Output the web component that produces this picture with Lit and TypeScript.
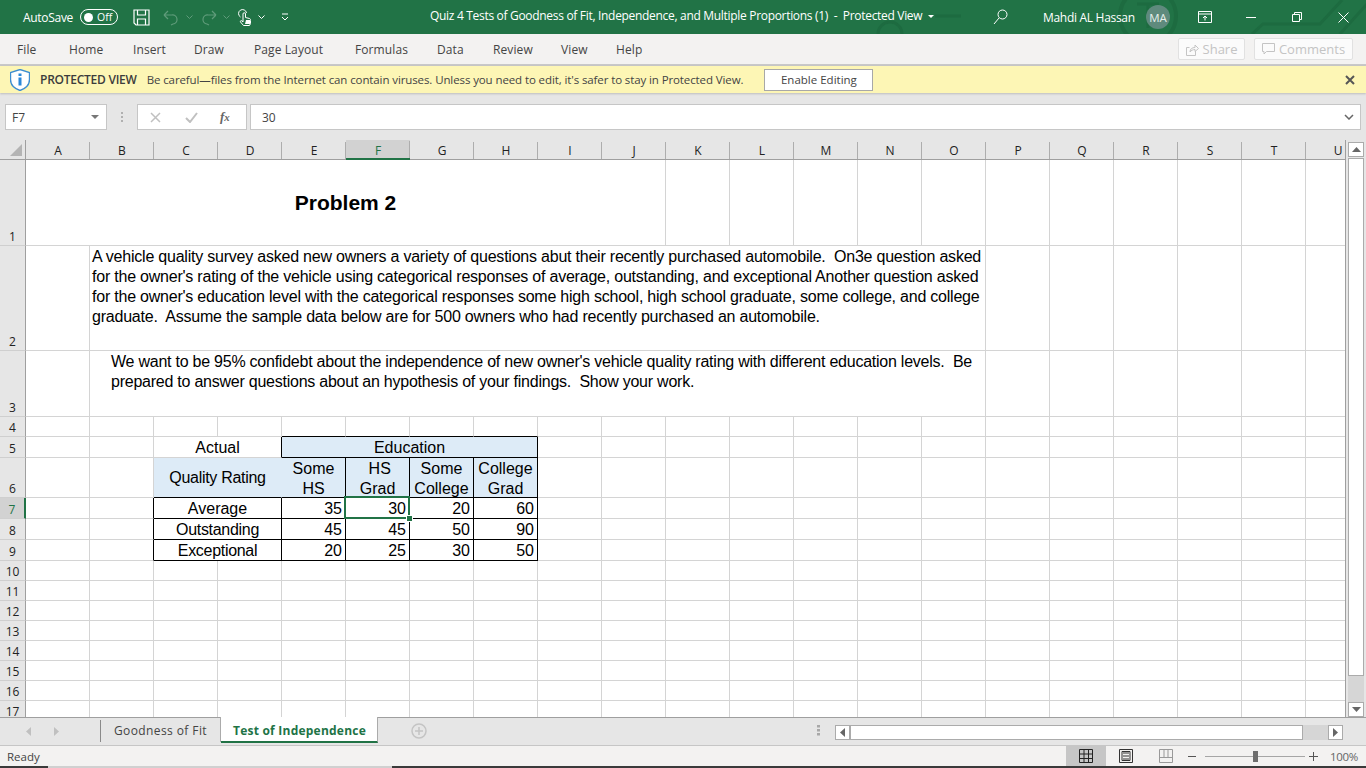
import { LitElement, css, html, svg } from 'lit';
import { customElement } from 'lit/decorators.js';

type Cell = { c: number; span?: number; text?: unknown; cls?: string };

const COLS = 'ABCDEFGHIJKLMNOPQRSTU'.split('');
const TABS = ['File', 'Home', 'Insert', 'Draw', 'Page Layout', 'Formulas', 'Data', 'Review', 'View', 'Help'];

// E..H = 4..7, table data rows
const dataRow = (label: string, nums: number[], sel = false, labelCls = ''): Cell[] => [
  { c: 1, cls: 'rb' },
  { c: 2, span: 2, text: label, cls: 'mid rb bb ' + labelCls },
  ...nums.map((n, i) => ({
    c: 4 + i,
    text: n,
    cls: 'num rb bb' + (sel && i === 1 ? ' sel' : ''),
  })),
];

const ROWS: { n: number; cells: Cell[] }[] = [
  { n: 1, cells: [{ c: 0, span: 10, text: 'Problem 2', cls: 'title-cell' }] },
  {
    n: 2,
    cells: [
      {
        c: 1,
        span: 14,
        cls: 'para',
        text: html`A vehicle quality survey asked new owners a variety of questions abut their recently purchased automobile.&nbsp; On3e question asked<br />for the owner's rating of the vehicle using categorical responses of average, outstanding, and exceptional Another question asked<br />for the owner's education level with the categorical responses some high school, high school graduate, some college, and college<br />graduate.&nbsp; Assume the sample data below are for 500 owners who had recently purchased an automobile.`,
      },
    ],
  },
  {
    n: 3,
    cells: [
      {
        c: 1,
        span: 14,
        cls: 'para indent',
        text: html`We want to be 95% confidebt about the independence of new owner's vehicle quality rating with different education levels.&nbsp; Be<br />prepared to answer questions about an hypothesis of your findings.&nbsp; Show your work.`,
      },
    ],
  },
  { n: 4, cells: [4, 5, 6, 7].map((c) => ({ c, cls: 'bb' })) },
  {
    n: 5,
    cells: [
      { c: 2, span: 2, text: 'Actual', cls: 'mid rb' },
      { c: 4, span: 4, text: 'Education', cls: 'mid blue rb bb' },
    ],
  },
  {
    n: 6,
    cells: [
      { c: 2, span: 2, text: 'Quality Rating', cls: 'mid blue vmid bb narrow noedge' },
      { c: 4, text: html`Some<br />HS`, cls: 'mid blue rb bb' },
      { c: 5, text: html`&nbsp;HS<br />Grad`, cls: 'mid blue rb bb' },
      { c: 6, text: html`Some<br />College`, cls: 'mid blue rb bb' },
      { c: 7, text: html`College<br />Grad`, cls: 'mid blue rb bb' },
    ],
  },
  { n: 7, cells: dataRow('Average', [35, 30, 20, 60], true) },
  { n: 8, cells: dataRow('Outstanding', [45, 45, 50, 90], false, 'narrow') },
  { n: 9, cells: dataRow('Exceptional', [20, 25, 30, 50], false, 'narrow') },
  ...[10, 11, 12, 13, 14, 15, 16, 17].map((n) => ({ n, cells: [] as Cell[] })),
];

// fills the gaps of a row with empty cells so the gridlines come out
function fillRow(cells: Cell[]): Cell[] {
  const out: Cell[] = [];
  let i = 0;
  const sorted = [...cells].sort((a, b) => a.c - b.c);
  for (const cell of sorted) {
    while (i < cell.c) out.push({ c: i++ });
    out.push(cell);
    i += cell.span ?? 1;
  }
  while (i < COLS.length) out.push({ c: i++ });
  return out;
}

@customElement('app-root')
export class AppRoot extends LitElement {
  static styles = css`
    :host {
      display: block;
      width: 1366px;
      height: 768px;
      overflow: hidden;
      font-family: 'Open Sans', 'Noto Sans', sans-serif;
      font-size: 12px;
      color: #444;
      background: #e6e6e6;
    }
    svg {
      display: block;
      flex: none;
    }

    /* title bar */
    .titlebar {
      position: relative;
      height: 34px;
      background: #217346;
      color: #fff;
      display: flex;
      align-items: center;
      overflow: hidden;
    }
    .titlebar > * {
      position: relative;
    }
    .titlebar > .decor {
      position: absolute;
      left: 0;
      top: 0;
    }
    .autosave {
      margin-left: 23px;
      letter-spacing: -0.3px;
    }
    .toggle {
      margin-left: 7px;
      width: 38px;
      height: 16px;
      box-sizing: border-box;
      border: 1px solid #fff;
      border-radius: 8px;
      display: flex;
      align-items: center;
      padding-left: 3px;
      font-size: 10.5px;
      gap: 4px;
    }
    .toggle i {
      width: 9px;
      height: 9px;
      border-radius: 50%;
      background: #fff;
    }
    .ic-save {
      margin-left: 15px;
    }
    .ic-undo {
      margin-left: 13px;
    }
    .ic-undo-c {
      margin-left: 8px;
    }
    .ic-redo {
      margin-left: 9px;
    }
    .ic-redo-c {
      margin-left: 6px;
    }
    .ic-touch {
      margin-left: 8px;
    }
    .ic-chev {
      margin-left: 7px;
    }
    .ic-qat {
      margin-left: 16px;
    }
    .doc-title {
      position: absolute !important;
      left: 430px;
      top: 8px;
      white-space: pre;
      letter-spacing: -0.31px;
      line-height: 16px;
    }
    .doc-caret {
      position: absolute !important;
      left: 928px;
      top: 15px;
    }
    .winside {
      margin-left: auto;
      display: flex;
      align-items: center;
    }
    .ic-search {
      margin-right: 35px;
    }
    .user {
      letter-spacing: -0.3px;
      width: 103px;
    }
    .avatar {
      width: 24px;
      height: 24px;
      border-radius: 50%;
      background: #5f8a7d;
      color: #e6f0ec;
      font-size: 11.5px;
      display: flex;
      align-items: center;
      justify-content: center;
    }
    .ic-ribbon {
      margin-left: 28px;
    }
    .ic-min {
      margin-left: 34px;
    }
    .ic-restore {
      margin-left: 36px;
    }
    .ic-close {
      margin-left: 36px;
      margin-right: 17px;
    }

    /* ribbon tabs */
    .ribbon {
      height: 30px;
      background: #f3f2f1;
      border-bottom: 2px solid #c8c8c8;
      display: flex;
      align-items: center;
      padding-left: 17px;
      padding-right: 13px;
    }
    .tabs {
      display: grid;
      grid-template-columns: 52px 64px 61px 60px 101px 82px 56px 68px 55px auto;
      color: #444;
      letter-spacing: 0.1px;
    }
    .ribbon-btns {
      margin-left: auto;
      display: flex;
      gap: 9px;
    }
    .rbtn {
      height: 22px;
      box-sizing: border-box;
      background: #fbfbfb;
      border: 1px solid #e1e1e1;
      border-radius: 2px;
      display: flex;
      align-items: center;
      justify-content: center;
      gap: 4px;
      color: #c4c4c4;
      font-size: 13px;
    }
    .rbtn.share {
      width: 67px;
    }
    .rbtn.comments {
      width: 99px;
    }

    /* protected view bar */
    .notice {
      height: 27px;
      background: #fdf6b5;
      box-shadow: 0 1px 2px rgba(0, 0, 0, 0.18);
      position: relative;
      display: flex;
      align-items: center;
      padding-left: 10px;
      color: #444;
    }
    .notice b {
      margin-left: 10px;
      font-weight: 600;
      letter-spacing: -0.25px;
      color: #3c3c3c;
    }
    .notice span {
      margin-left: 10px;
      font-size: 11.5px;
      letter-spacing: -0.105px;
      white-space: nowrap;
    }
    .notice button {
      margin-left: 21px;
      width: 109px;
      height: 22px;
      background: #fff;
      border: 1px solid #a8a8a8;
      font: inherit;
      font-size: 11.5px;
      color: #444;
      padding: 0;
    }
    .notice .ic-x {
      margin-left: auto;
      margin-right: 11px;
    }

    /* formula bar */
    .formula {
      height: 47px;
      box-sizing: border-box;
      padding: 11px 5px 10px 5px;
      display: flex;
      align-items: flex-start;
    }
    .fbox {
      height: 26px;
      box-sizing: border-box;
      background: #fff;
      border: 1px solid #c6c6c6;
      display: flex;
      align-items: center;
    }
    .namebox {
      width: 102px;
      padding: 0 7px 0 6px;
      justify-content: space-between;
      color: #444;
    }
    .grip {
      width: 30px;
      height: 26px;
      display: flex;
      justify-content: center;
      align-items: center;
    }
    .fbtns {
      width: 110px;
      padding-left: 12px;
      gap: 24px;
    }
    .fx {
      font-family: 'Liberation Serif', serif;
      font-style: italic;
      font-weight: 700;
      font-size: 13px;
      color: #666;
      margin-left: -2px;
    }
    .finput {
      margin-left: 3px;
      flex: 1;
      padding: 0 6px 0 11px;
      justify-content: space-between;
    }

    /* sheet */
    .sheetwrap {
      height: 578px;
      display: flex;
      border-bottom: 1px solid #9f9f9f;
      box-sizing: border-box;
    }
    .sheet {
      width: 1346px;
      overflow: hidden;
      background: #fff;
      border-right: 1px solid #9f9f9f;
      box-sizing: border-box;
    }
    .grid {
      display: grid;
      grid-template-columns: 26px repeat(21, 64px);
      grid-template-rows: 20px 86px 105px 66px 20px 21px 40px 21px 21px 21px repeat(8, 20px);
      font-family: 'Liberation Sans', Arial, sans-serif;
      font-size: 16px;
      color: #000;
    }
    .corner,
    .ch,
    .rh {
      background: #e6e6e6;
      font-family: 'Open Sans', sans-serif;
      font-size: 12px;
      color: #222;
      box-sizing: border-box;
    }
    .corner {
      border-right: 1px solid #9f9f9f;
      border-bottom: 1px solid #9f9f9f;
      display: flex;
      align-items: center;
      justify-content: flex-end;
      padding-right: 3px;
    }
    .ch {
      display: flex;
      align-items: center;
      justify-content: center;
      border-bottom: 1px solid #9f9f9f;
      position: relative;
      padding-top: 1px;
    }
    .ch::after {
      content: '';
      position: absolute;
      right: 0;
      bottom: 0;
      width: 1px;
      height: 17px;
      background: #adadad;
    }
    .ch.on {
      background: #d2d2d2;
      color: #217346;
      border-bottom: 2px solid #217346;
      padding-top: 2px;
    }
    .rh {
      border-right: 1px solid #9f9f9f;
      border-bottom: 1px solid #cfcfcf;
      display: flex;
      align-items: flex-end;
      justify-content: center;
      line-height: 17px;
    }
    .rh.on {
      background: #d2d2d2;
      color: #217346;
      border-right: 2px solid #217346;
    }
    .cell {
      box-sizing: border-box;
      border-right: 1px solid #d4d4d4;
      border-bottom: 1px solid #d4d4d4;
      padding-top: 1px;
      line-height: 20px;
      white-space: nowrap;
      overflow: visible;
      min-width: 0;
    }
    .rb {
      border-right-color: #000;
    }
    .bb {
      border-bottom-color: #000;
    }
    .mid {
      text-align: center;
    }
    .num {
      text-align: right;
      padding-right: 3px;
    }
    .blue {
      background: #ddebf7;
    }
    .noedge {
      border-right-color: #ddebf7;
    }
    .narrow {
      letter-spacing: -0.3px;
    }
    .vmid {
      padding-top: 0;
      line-height: 39px;
    }
    .title-cell {
      font-weight: 700;
      font-size: 21px;
      text-align: center;
      line-height: 83px;
    }
    .para {
      padding-left: 2px;
      letter-spacing: -0.22px;
    }
    .para.indent {
      padding-left: 21px;
      letter-spacing: -0.24px;
    }
    .sel {
      position: relative;
    }
    .sel::before {
      content: '';
      position: absolute;
      left: -2px;
      top: -2px;
      right: -1px;
      bottom: -1px;
      border: 2px solid #217346;
      pointer-events: none;
    }
    .sel::after {
      content: '';
      position: absolute;
      right: -3px;
      bottom: -3px;
      width: 5px;
      height: 5px;
      background: #217346;
      border: 1px solid #fff;
      box-sizing: content-box;
      margin: -1px;
    }

    /* vertical scrollbar */
    .vscroll {
      width: 20px;
      box-sizing: border-box;
      padding: 2px 2px 0 2px;
      display: flex;
      flex-direction: column;
    }
    .sbtn {
      box-sizing: border-box;
      background: #fff;
      border: 1px solid #ababab;
      display: flex;
      align-items: center;
      justify-content: center;
      flex: none;
    }
    .vscroll .sbtn {
      height: 15px;
    }
    .vthumb {
      margin-top: 1px;
      height: 518px;
      background: #fff;
      border: 1px solid #ababab;
      box-sizing: border-box;
    }
    .vtrack {
      flex: 1;
      background: #d6d6d6;
    }

    /* sheet tabs */
    .sheetbar {
      height: 27px;
      display: flex;
      align-items: flex-start;
      border-bottom: 1px solid #c6c6c6;
      box-sizing: content-box;
      color: #444;
    }
    .nav {
      display: flex;
      width: 101px;
      height: 22px;
      padding-left: 26px;
      box-sizing: border-box;
      gap: 23px;
      align-items: center;
      margin-top: 2px;
      border-right: 1px solid #8a8a8a;
    }
    .stab {
      display: flex;
      align-items: center;
    }
    .stab.plain {
      width: 120px;
      padding: 1px 0 0 13px;
      box-sizing: border-box;
      border-right: 1px solid #ababab;
      height: 25px;
      margin-top: -1px;
      letter-spacing: 0.4px;
    }
    .stab.active {
      width: 157px;
      height: 26px;
      margin-top: -1px;
      padding: 2px 0 0 1px;
      justify-content: center;
      background: #fff;
      color: #217346;
      font-weight: 700;
      border-right: 1px solid #ababab;
      border-bottom: 2px solid #217346;
      box-sizing: border-box;
      letter-spacing: 0.23px;
    }
    .ic-plus {
      margin: 5px 0 0 33px;
    }
    .ic-dots {
      margin: 7px 0 0 390px;
    }
    .hscroll {
      margin: 7px 0 0 15px;
      width: 508px;
      height: 15px;
      display: flex;
    }
    .hscroll .sbtn {
      width: 15px;
    }
    .hthumb {
      flex: 1;
      background: #fff;
      border: 1px solid #ababab;
      box-sizing: border-box;
    }
    .htrack {
      width: 25px;
      background: #d6d6d6;
    }

    /* status bar */
    .status {
      height: 20px;
      background: #f3f2f1;
      display: flex;
      align-items: center;
      padding-left: 7px;
      font-size: 11.5px;
      color: #444;
    }
    .views {
      margin-left: auto;
      display: flex;
      align-items: center;
      height: 20px;
    }
    .vw {
      width: 40px;
      height: 20px;
      display: flex;
      align-items: center;
      justify-content: center;
    }
    .vw.on {
      background: #c6c6c6;
    }
    .zoomer {
      display: flex;
      align-items: center;
      margin-left: 2px;
    }
    .slider {
      margin: 0 4px 0 9px;
      width: 100px;
      height: 1px;
      background: #a6a6a6;
      position: relative;
    }
    .slider i {
      position: absolute;
      left: 48px;
      top: -5px;
      width: 5px;
      height: 11px;
      background: #6e6e6e;
    }
    .pct {
      margin-left: 12px;
      margin-right: 8px;
      color: #666;
      letter-spacing: -0.3px;
    }
    .taskbar {
      height: 2px;
      display: flex;
      background: #3a3a3a;
    }
    .taskbar i {
      margin-left: 48px;
      width: 344px;
      background: #d0d0d0;
    }
  `;

  private renderDecor() {
    return svg`<svg class="decor" width="1366" height="34" viewBox="0 0 1366 34" fill="none" stroke="#1d6b40" stroke-width="3">
      <circle cx="1148" cy="16" r="28" stroke-width="4" />
      <path d="M1137 4h22M1148 4v24" />
      <path d="M1252 34l11-10h57l22-24" />
      <path d="M1340 34l27-30" />
      <path d="M935 16h26" />
      <path d="M878 34a12 12 0 0 1 24 0" />
    </svg>`;
  }

  private renderCol(col: string) {
    return html`<div class="ch ${col === 'F' ? 'on' : ''}">${col}</div>`;
  }

  private renderRow(row: { n: number; cells: Cell[] }) {
    return html`
      <div class="rh ${row.n === 7 ? 'on' : ''}">${row.n}</div>
      ${fillRow(row.cells).map(
        (cell) =>
          html`<div
            class="cell ${cell.cls ?? ''}"
            style="grid-column: span ${cell.span ?? 1}"
          >${cell.text ?? ''}</div>`,
      )}
    `;
  }

  render() {
    return html`
      <div class="titlebar">
        ${this.renderDecor()}
        <span class="autosave">AutoSave</span>
        <div class="toggle"><i></i>Off</div>
        <svg class="ic-save" width="17" height="17" viewBox="0 0 17 17" fill="none" stroke="#fff" stroke-width="1.2">
          <path d="M1 1h15v15H3l-2-2z" />
          <path d="M4.500 1v5h8V1M4.500 16v-6h8v6" />
        </svg>
        <svg class="ic-undo" width="15" height="17" viewBox="0 0 15 17" fill="none" stroke="#5f9b7a" stroke-width="1.2">
          <path d="M1 6h8a4.500 4.500 0 0 1 1 9l-2 1M1 6l4-4M1 6l4 4" />
        </svg>
        <svg class="ic-undo-c" width="7" height="4" viewBox="0 0 7 4" fill="none" stroke="#5f9b7a"><path d="M.5.5l3 3 3-3" /></svg>
        <svg class="ic-redo" width="15" height="17" viewBox="0 0 15 17" fill="none" stroke="#5f9b7a" stroke-width="1.2">
          <path d="M14 6H6a4.500 4.500 0 0 0-1 9l2 1M14 6l-4-4M14 6l-4 4" />
        </svg>
        <svg class="ic-redo-c" width="7" height="4" viewBox="0 0 7 4" fill="none" stroke="#5f9b7a"><path d="M.5.5l3 3 3-3" /></svg>
        <svg class="ic-touch" width="13" height="17" viewBox="0 0 13 17" fill="none" stroke="#fff">
          <path d="M2.500 8a4 4 0 1 1 6-4" />
          <path d="M5 13V5a1.200 1.200 0 0 1 2.500 0v3.500l4 1c1 .3 1 1 1 2v3l-1 2H5.500L2.500 13c-.6-1 .7-2 1.500-1z" />
          <path d="M8 11h4v4H7z" fill="#fff" stroke="none" />
        </svg>
        <svg class="ic-chev" width="7" height="4" viewBox="0 0 7 4" fill="none" stroke="#fff"><path d="M.5.5l3 3 3-3" /></svg>
        <svg class="ic-qat" width="8" height="8" viewBox="0 0 8 8" fill="none" stroke="#fff"><path d="M1 1h6M1 4l3 3 3-3" /></svg>
        <span class="doc-title">Quiz 4 Tests of Goodness of Fit, Independence, and Multiple Proportions (1)  -  Protected View</span>
        <svg class="doc-caret" width="6" height="3" viewBox="0 0 6 3" fill="#fff"><path d="M0 0h6l-3 3z" /></svg>
        <div class="winside">
          <svg class="ic-search" width="15" height="16" viewBox="0 0 15 16" fill="none" stroke="#fff">
            <circle cx="9.500" cy="5.500" r="4.500" />
            <path d="M6 9L1 15" />
          </svg>
          <span class="user">Mahdi AL Hassan</span>
          <span class="avatar">MA</span>
          <svg class="ic-ribbon" width="14" height="12" viewBox="0 0 14 12" fill="none" stroke="#fff">
            <path d="M.5.5h13v11H.5zM.5 3h13" />
            <path d="M7 9.500V5M5 7l2-2 2 2" />
          </svg>
          <svg class="ic-min" width="10" height="1" viewBox="0 0 10 1" stroke="#fff"><path d="M0 .5h10" /></svg>
          <svg class="ic-restore" width="10" height="10" viewBox="0 0 10 10" fill="none" stroke="#fff">
            <path d="M.5 2.500h7v7h-7zM2.500 2.500v-2h7v7h-2" />
          </svg>
          <svg class="ic-close" width="11" height="11" viewBox="0 0 11 11" fill="none" stroke="#fff"><path d="M.5.5l10 10M10.500.5l-10 10" /></svg>
        </div>
      </div>

      <div class="ribbon">
        <div class="tabs">${TABS.map((t) => html`<span>${t}</span>`)}</div>
        <div class="ribbon-btns">
          <div class="rbtn share">
            <svg width="13" height="13" viewBox="0 0 13 13" fill="none" stroke="#c4c4c4">
              <path d="M9.500 8v4.500h-9v-8h3M4 9c0-3 2-4.500 5-4.500V2l3.500 3.500L9 8.500V6.500C7 6.500 5 7.500 4 9z" />
            </svg>
            Share
          </div>
          <div class="rbtn comments">
            <svg width="13" height="12" viewBox="0 0 13 12" fill="none" stroke="#c4c4c4"><path d="M.5.500h12v8h-8l-2.500 2.500v-2.500H.5z" /></svg>
            Comments
          </div>
        </div>
      </div>

      <div class="notice">
        <svg width="20" height="22" viewBox="0 0 20 22">
          <path d="M10 .5l9.500 3v7c0 5-4 9-9.500 11C4.500 19.500.5 15.500.5 10.500v-7z" fill="#fff" stroke="#3d8dd0" stroke-width="1.400" />
          <rect x="8.500" y="4.500" width="3" height="2.500" fill="#2b88d8" />
          <rect x="8.500" y="8.500" width="3" height="8" fill="#2b88d8" />
        </svg>
        <b>PROTECTED VIEW</b>
        <span>Be careful—files from the Internet can contain viruses. Unless you need to edit, it's safer to stay in Protected View.</span>
        <button>Enable Editing</button>
        <svg class="ic-x" width="10" height="10" viewBox="0 0 10 10" stroke="#555" stroke-width="2"><path d="M1 1l8 8M9 1l-8 8" /></svg>
      </div>

      <div class="formula">
        <div class="fbox namebox">
          F7
          <svg width="8" height="4" viewBox="0 0 8 4" fill="#777"><path d="M0 0h8l-4 4z" /></svg>
        </div>
        <div class="grip">
          <svg width="2" height="10" viewBox="0 0 2 10" fill="#b0b0b0"><path d="M0 0h2v2H0zM0 4h2v2H0zM0 8h2v2H0z" /></svg>
        </div>
        <div class="fbox fbtns">
          <svg width="11" height="11" viewBox="0 0 11 11" stroke="#c0c0c0" stroke-width="1.500"><path d="M1 1l9 9M10 1l-9 9" /></svg>
          <svg width="13" height="11" viewBox="0 0 13 11" fill="none" stroke="#c0c0c0" stroke-width="2"><path d="M1 6l4 4 7-9" /></svg>
          <span class="fx">f<small>x</small></span>
        </div>
        <div class="fbox finput">
          30
          <svg width="10" height="6" viewBox="0 0 10 6" fill="none" stroke="#666" stroke-width="1.500"><path d="M1 1l4 4 4-4" /></svg>
        </div>
      </div>

      <div class="sheetwrap">
        <div class="sheet">
          <div class="grid">
            <div class="corner">
              <svg width="12" height="12" viewBox="0 0 12 12" fill="#b4b4b4"><path d="M12 0v12H0z" /></svg>
            </div>
            ${COLS.map((c) => this.renderCol(c))}
            ${ROWS.map((r) => this.renderRow(r))}
          </div>
        </div>
        <div class="vscroll">
          <div class="sbtn"><svg width="9" height="5" viewBox="0 0 9 5" fill="#666"><path d="M4.500 0l4.500 5H0z" /></svg></div>
          <div class="vthumb"></div>
          <div class="vtrack"></div>
          <div class="sbtn"><svg width="9" height="5" viewBox="0 0 9 5" fill="#666"><path d="M0 0h9L4.500 5z" /></svg></div>
        </div>
      </div>

      <div class="sheetbar">
        <div class="nav">
          <svg width="5" height="9" viewBox="0 0 5 9" fill="#c0c0c0"><path d="M5 0v9L0 4.500z" /></svg>
          <svg width="5" height="9" viewBox="0 0 5 9" fill="#c0c0c0"><path d="M0 0v9l5-4.500z" /></svg>
        </div>
        <div class="stab plain">Goodness of Fit</div>
        <div class="stab active">Test of Independence</div>
        <svg class="ic-plus" width="16" height="16" viewBox="0 0 16 16" fill="none" stroke="#c4c4c4" stroke-width="1.500">
          <circle cx="8" cy="8" r="7" />
          <path d="M8 4v8M4 8h8" />
        </svg>
        <svg class="ic-dots" width="3" height="11" viewBox="0 0 3 11" fill="#a8a8a8"><path d="M0 0h3v2.500H0zM0 4h3v2.500H0zM0 8h3v2.500H0z" /></svg>
        <div class="hscroll">
          <div class="sbtn"><svg width="5" height="9" viewBox="0 0 5 9" fill="#666"><path d="M5 0v9L0 4.500z" /></svg></div>
          <div class="hthumb"></div>
          <div class="htrack"></div>
          <div class="sbtn"><svg width="5" height="9" viewBox="0 0 5 9" fill="#666"><path d="M0 0v9l5-4.500z" /></svg></div>
        </div>
      </div>

      <div class="status">
        Ready
        <div class="views">
          <div class="vw on">
            <svg width="14" height="14" viewBox="0 0 14 14" fill="none" stroke="#222"><path d="M.5.5h13v13H.5zM.5 5h13M.5 9.500h13M5 .5v13M9.500.5v13" /></svg>
          </div>
          <div class="vw">
            <svg width="14" height="14" viewBox="0 0 14 14" fill="none" stroke="#333"><path d="M.5.5h13v13H.5zM4 4h6M4 7h6M4 10h6M3 2.500h8v9H3z" /></svg>
          </div>
          <div class="vw">
            <svg width="14" height="14" viewBox="0 0 14 14" fill="none" stroke="#999"><path d="M.5.5h13v13H.5zM.5 8.500h13M5 .5v8M9 .5v8" /></svg>
          </div>
          <div class="zoomer">
            <svg width="8" height="1" viewBox="0 0 8 1" stroke="#555"><path d="M0 .5h8" /></svg>
            <div class="slider"><i></i></div>
            <svg width="9" height="9" viewBox="0 0 9 9" stroke="#555"><path d="M0 4.500h9M4.500 0v9" /></svg>
            <span class="pct">100%</span>
          </div>
        </div>
      </div>
      <div class="taskbar"><i></i></div>
    `;
  }
}
